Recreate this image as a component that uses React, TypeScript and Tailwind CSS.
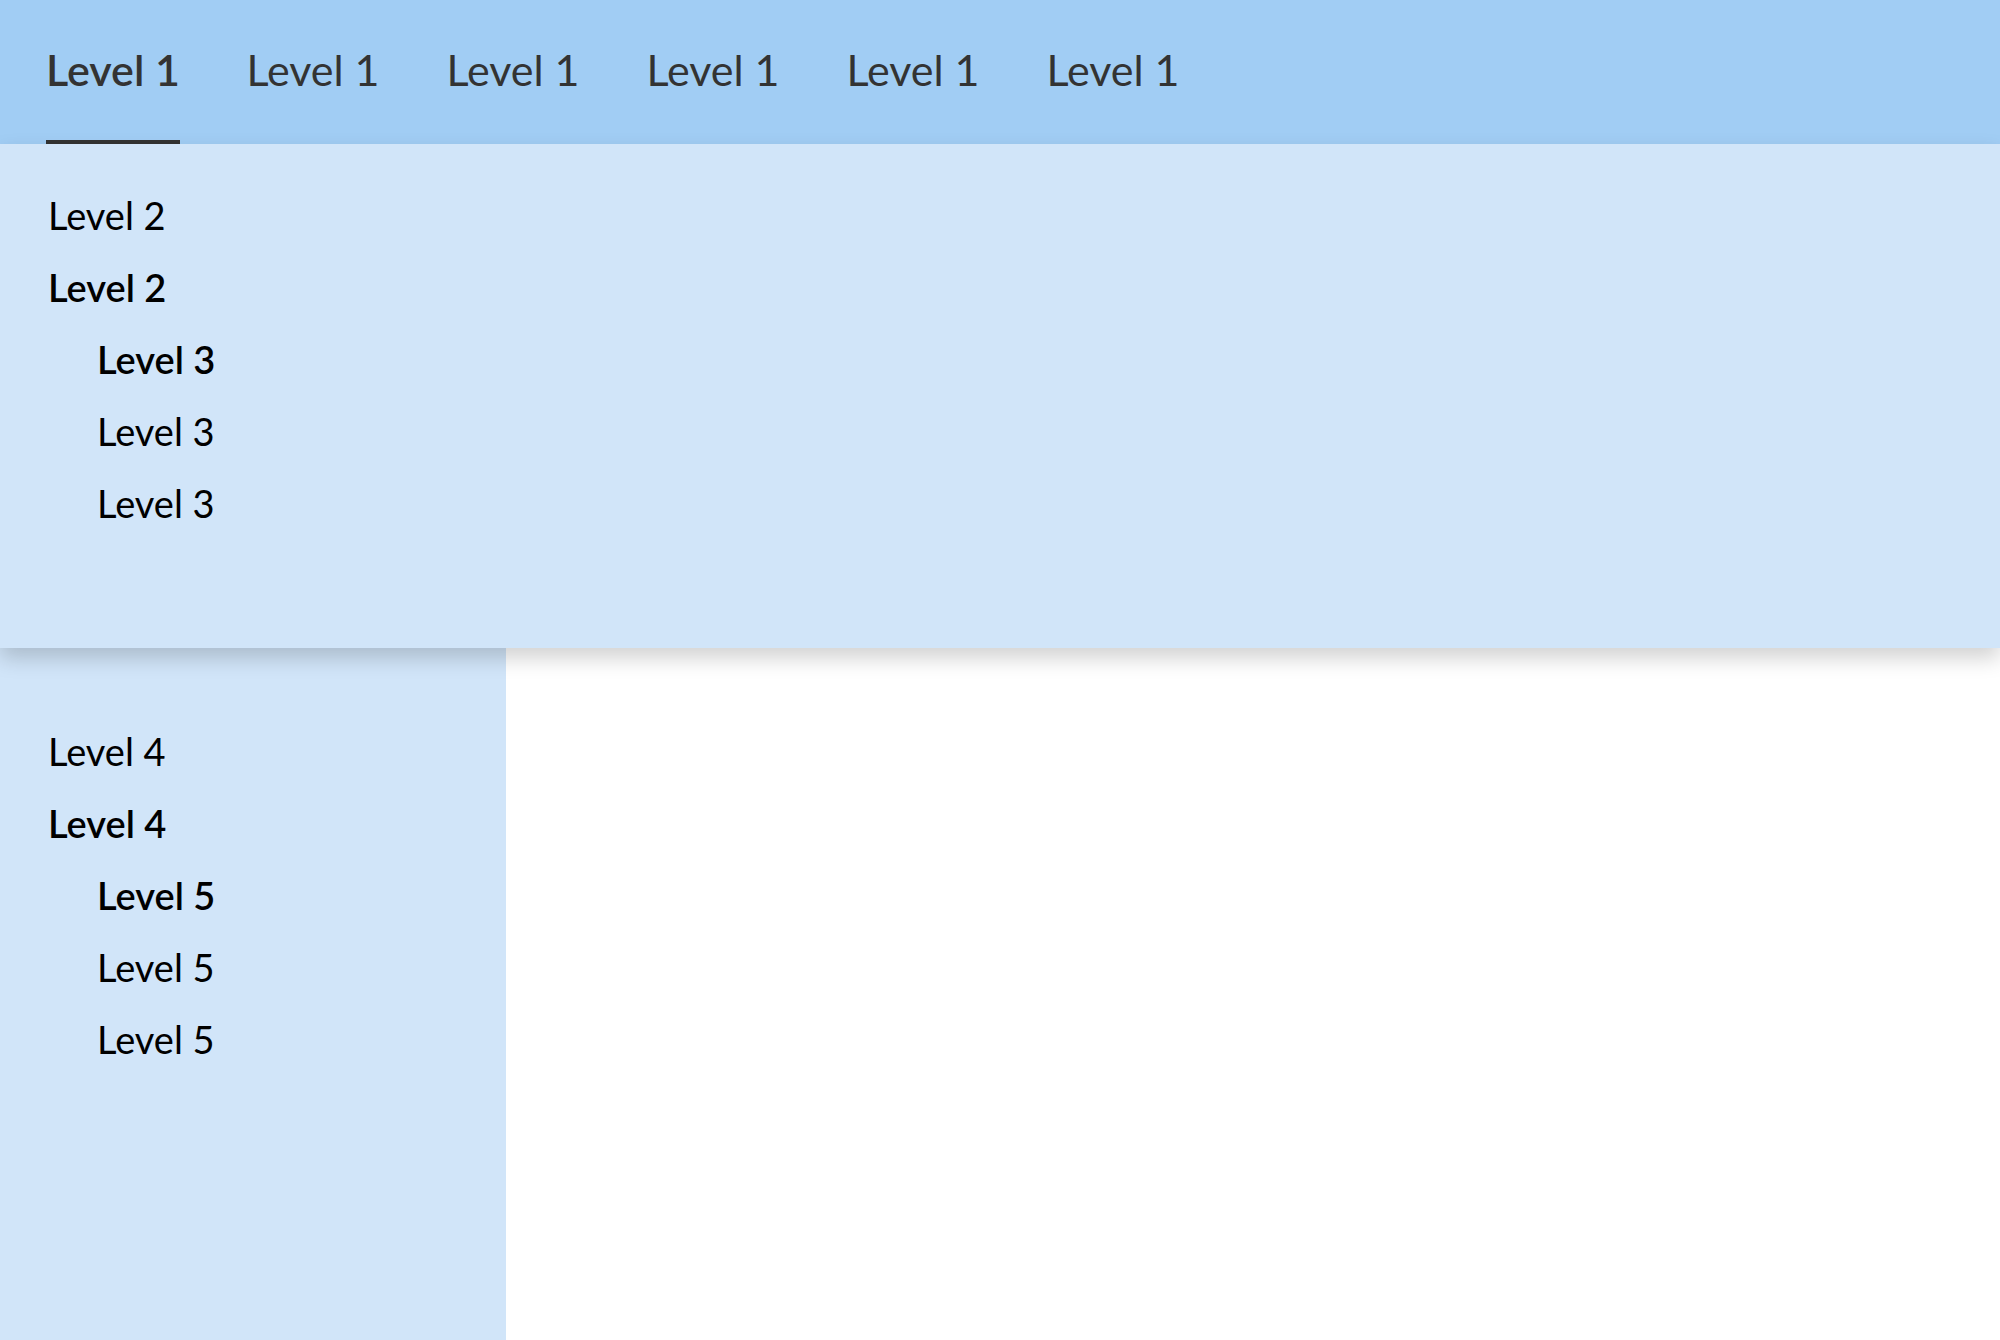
const tabs = ['Level 1', 'Level 1', 'Level 1', 'Level 1', 'Level 1', 'Level 1'];

type Item = { label: string; depth: number; bold?: boolean };

const panelItems: Item[] = [
  { label: 'Level 2', depth: 0 },
  { label: 'Level 2', depth: 0, bold: true },
  { label: 'Level 3', depth: 1, bold: true },
  { label: 'Level 3', depth: 1 },
  { label: 'Level 3', depth: 1 },
];

const sideItems: Item[] = [
  { label: 'Level 4', depth: 0 },
  { label: 'Level 4', depth: 0, bold: true },
  { label: 'Level 5', depth: 1, bold: true },
  { label: 'Level 5', depth: 1 },
  { label: 'Level 5', depth: 1 },
];

const NavList = ({ items }: { items: Item[] }) => (
  <ul className="flex flex-col">
    {items.map((item, i) => (
      <li
        className={`h-[72px] whitespace-nowrap text-[38px] leading-[72px] text-black ${
          item.depth ? 'pl-[97px]' : 'pl-[48px]'
        } ${item.bold ? 'font-semibold' : 'font-normal'}`}
        key={i}
      >
        {item.label}
      </li>
    ))}
  </ul>
);

export default function App() {
  return (
    <div className="flex h-screen w-full flex-col bg-white font-['Lato',sans-serif]">
      <header className="flex h-[144px] shrink-0 gap-[66px] bg-[#a1cdf4] pl-[46px]">
        {tabs.map((tab, i) => (
          <div
            className={`flex h-full w-[134px] items-center justify-center whitespace-nowrap text-[43px] text-[#333333] ${
              i === 0 ? 'border-b-4 border-[#333333] font-semibold' : 'border-b-4 border-transparent'
            }`}
            key={i}
          >
            {tab}
          </div>
        ))}
      </header>

      <section className="relative z-10 h-[504px] shrink-0 bg-[#d1e5f9] pt-[35px] shadow-[0_10px_20px_rgba(0,0,0,0.18)]">
        <NavList items={panelItems} />
      </section>

      <div className="flex min-h-0 flex-1">
        <aside className="w-[506px] shrink-0 bg-[#d1e5f9] pt-[67px]">
          <NavList items={sideItems} />
        </aside>
        <main className="flex-1 bg-white" />
      </div>
    </div>
  );
}
